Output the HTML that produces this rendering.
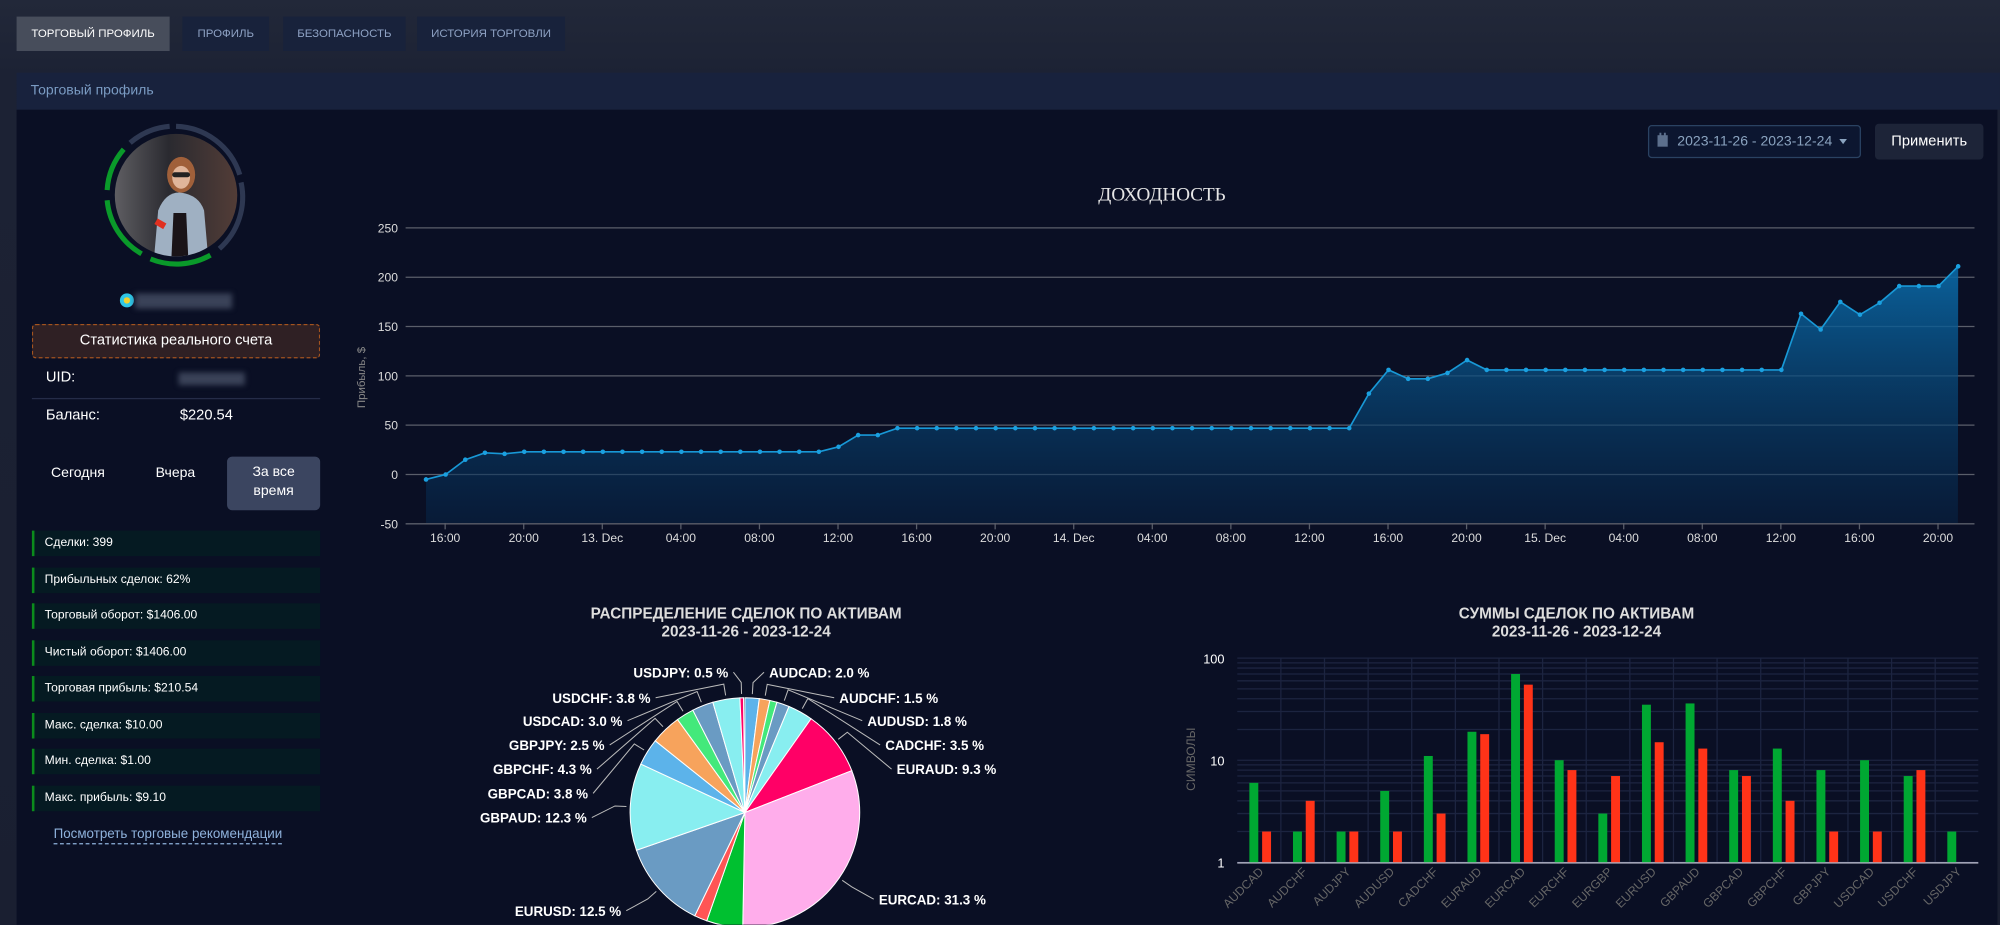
<!DOCTYPE html>
<html><head><meta charset="utf-8">
<style>
html,body{margin:0;padding:0;background:#1c2133;overflow:hidden;width:2000px;height:925px}
#w{position:absolute;left:0;top:0;width:1568px;height:725px;transform:scale(1.27551);transform-origin:0 0;
 background:linear-gradient(180deg,#222839 0,#1c2234 60px,#1a1f31 100%);font-family:"Liberation Sans",sans-serif;overflow:hidden}
.a{position:absolute}
.tab{position:absolute;top:13px;height:27px;line-height:27px;font-size:9px;text-align:center;color:#8ea2c4;background:#18223b}
.hdr{left:13px;top:57px;width:1555px;height:29px;background:#18223d;color:#7a9bc2;font-size:11px;line-height:29px;text-indent:11px}
.main{left:13px;top:86px;width:1553px;height:640px;background:#0a0f24}
.st{position:absolute;left:25px;width:226px;height:20px;background:#051a22;border-left:2px solid #0b8c1c;color:#fff;font-size:9.5px;line-height:20px;text-indent:8px;box-sizing:border-box}
.t{color:#fff;font-size:11.5px}
</style></head><body><div id="w">
<div class="tab" style="left:13px;width:120px;background:#474d5b;color:#fff">ТОРГОВЫЙ ПРОФИЛЬ</div>
<div class="tab" style="left:143px;width:68px">ПРОФИЛЬ</div>
<div class="tab" style="left:222px;width:96px">БЕЗОПАСНОСТЬ</div>
<div class="tab" style="left:327px;width:116px">ИСТОРИЯ ТОРГОВЛИ</div>
<div class="a hdr">Торговый профиль</div>
<div class="a main"></div>

<!-- avatar -->
<svg class="a" style="left:80px;top:95px" width="116" height="116" viewBox="0 0 116 116">
<defs><clipPath id="cc"><circle cx="58" cy="58" r="48"/></clipPath>
<linearGradient id="bgp" x1="0" y1="0" x2="1" y2="0"><stop offset="0" stop-color="#6b6a6e"/><stop offset=".45" stop-color="#2a2a30"/><stop offset="1" stop-color="#5a4038"/></linearGradient></defs>
<g clip-path="url(#cc)"><rect width="116" height="116" fill="url(#bgp)"/>
<path d="M40 116 L44 70 Q50 55 62 56 Q76 58 80 70 L84 116Z" fill="#9fb0c2"/>
<path d="M54 116 L56 72 L66 72 L68 116Z" fill="#1a1418"/>
<ellipse cx="62" cy="42" rx="11" ry="14" fill="#a0603a"/>
<ellipse cx="62" cy="44" rx="7" ry="9" fill="#e0b59a"/>
<rect x="55" y="40" width="14" height="4" rx="2" fill="#222"/>
<rect x="42" y="78" width="8" height="5" fill="#e03020" transform="rotate(30 46 80)"/></g>
<g fill="none" stroke-width="4">
<path d="M58 4 A54 54 0 0 1 108 42" stroke="#2e3852"/>
<path d="M109 48 A54 54 0 0 1 92 100" stroke="#2e3852"/>
<path d="M85 105 A54 54 0 0 1 38 108" stroke="#0a9a2a"/>
<path d="M31 104 A54 54 0 0 1 4 62" stroke="#0a9a2a"/>
<path d="M4 54 A54 54 0 0 1 17 22" stroke="#0a9a2a"/>
<path d="M22 17 A54 54 0 0 1 53 4" stroke="#2e3852"/></g></svg>
<div class="a" style="left:94px;top:230px;width:11px;height:11px;border-radius:50%;background:#2ec6e6"><div style="margin:3px;width:5px;height:5px;border-radius:50%;background:#f0d030"></div></div>
<div class="a" style="left:106px;top:230px;width:76px;height:12px;background:#3a4258;filter:blur(2px)"></div>
<div class="a" style="left:25px;top:254px;width:226px;height:27px;box-sizing:border-box;border:1px dashed #a3531f;border-radius:3px;background:#2f2024;color:#fff;font-size:11.5px;text-align:center;line-height:25px">Статистика реального счета</div>
<div class="a t" style="left:36px;top:290px">UID:</div>
<div class="a" style="left:140px;top:292px;width:52px;height:10px;background:#3a4258;filter:blur(2px)"></div>
<div class="a" style="left:25px;top:312px;width:226px;height:1px;background:#252c48"></div>
<div class="a t" style="left:36px;top:320px">Баланс:</div>
<div class="a t" style="left:141px;top:320px">$220.54</div>
<div class="a t" style="left:40px;top:365px;font-size:11px">Сегодня</div>
<div class="a t" style="left:122px;top:365px;font-size:11px">Вчера</div>
<div class="a" style="left:178px;top:358px;width:73px;height:42px;border-radius:4px;background:#3b4560;color:#fff;font-size:11px;text-align:center;line-height:15px;padding-top:5px;box-sizing:border-box">За все<br>время</div>
<div class="st" style="top:416px">Сделки: 399</div>
<div class="st" style="top:445px">Прибыльных сделок: 62%</div>
<div class="st" style="top:473px">Торговый оборот: $1406.00</div>
<div class="st" style="top:502px">Чистый оборот: $1406.00</div>
<div class="st" style="top:530px">Торговая прибыль: $210.54</div>
<div class="st" style="top:559px">Макс. сделка: $10.00</div>
<div class="st" style="top:587px">Мин. сделка: $1.00</div>
<div class="st" style="top:616px">Макс. прибыль: $9.10</div>
<div class="a" style="left:42px;top:648px;color:#8fb2dc;font-size:10.5px;border-bottom:1px dashed #8fb2dc;line-height:13px">Посмотреть торговые рекомендации</div>

<div class="a" style="left:1292px;top:98px;width:167px;height:26px;box-sizing:border-box;border:1px solid #2a4262;border-radius:3px;background:#0c1630;color:#8aa3bf;font-size:11px;line-height:24px;text-indent:22px">2023-11-26 - 2023-12-24</div>
<svg class="a" style="left:1299px;top:104px" width="10" height="12"><rect x="0.5" y="2" width="8" height="9" fill="#5c6f8c"/><rect x="2" y="0" width="1.5" height="3" fill="#5c6f8c"/><rect x="5.5" y="0" width="1.5" height="3" fill="#5c6f8c"/></svg>
<div class="a" style="left:1442px;top:109px;border:3px solid transparent;border-top:4px solid #8aa3bf"></div>
<div class="a" style="left:1470px;top:97px;width:85px;height:28px;border-radius:3px;background:#1d2438;color:#fff;font-size:11.5px;text-align:center;line-height:28px">Применить</div>

<svg id="c" class="a" style="left:0;top:0" width="1568" height="725" font-family="Liberation Sans, sans-serif"></svg>
</div>
<script>
var s=document.getElementById('c'),h='';
function T(x,y,t,o){h+='<text x="'+x+'" y="'+y+'" '+(o||'')+'>'+t+'</text>';}
T(911,157,'ДОХОДНОСТЬ','text-anchor="middle" font-family="Liberation Serif,serif" font-size="15" fill="#e6e6e6"');
var Y=function(v){return 372-v*0.7733;};
[250,200,150,100,50,0,-50].forEach(function(v){var y=Y(v);h+='<line x1="318" x2="1548" y1="'+y+'" y2="'+y+'" stroke="#5a5e6a"/>';T(312,y+3.5,v,'text-anchor="end" font-size="9.5" fill="#ddd"');});
T(0,0,'Прибыль, $','transform="translate(286,320) rotate(-90)" font-size="9" fill="#888"');
var L=['16:00','20:00','13. Dec','04:00','08:00','12:00','16:00','20:00','14. Dec','04:00','08:00','12:00','16:00','20:00','15. Dec','04:00','08:00','12:00','16:00','20:00'];
L.forEach(function(l,i){var x=349+61.6*i;h+='<line x1="'+x+'" x2="'+x+'" y1="410" y2="415" stroke="#5a5e6a"/>';T(x,425,l,'text-anchor="middle" font-size="9.5" fill="#ddd"');});
var v=[-5,0,15,22,21];for(var i=5;i<=20;i++)v.push(23);v.push(28,40,40);for(i=24;i<=47;i++)v.push(47);
v.push(82,106,97,97,103,116);for(i=54;i<=69;i++)v.push(106);v.push(163,147,175,162,174,191,191,191,211);
var p=v.map(function(a,i){return (334+15.4*i).toFixed(1)+','+Y(a).toFixed(1);});
h+='<defs><linearGradient id="ag" x1="0" y1="0" x2="0" y2="1"><stop offset="0" stop-color="#0a6aa8" stop-opacity=".9"/><stop offset="1" stop-color="#06264a" stop-opacity=".5"/></linearGradient></defs>';
h+='<polygon points="334,410 '+p.join(' ')+' 1535,410" fill="url(#ag)"/>';
h+='<polyline points="'+p.join(' ')+'" fill="none" stroke="#1898d6" stroke-width="1.3"/>';
p.forEach(function(q){var a=q.split(',');h+='<circle cx="'+a[0]+'" cy="'+a[1]+'" r="1.8" fill="#1aa0e0"/>';});
T(585,485,'РАСПРЕДЕЛЕНИЕ СДЕЛОК ПО АКТИВАМ','text-anchor="middle" font-size="12" font-weight="bold" fill="#ddd"');
T(585,499,'2023-11-26 - 2023-12-24','text-anchor="middle" font-size="12" font-weight="bold" fill="#ddd"');
var P=[['AUDCAD',2,'#5cb3ea'],['AUDCHF',1.5,'#f7a35c'],['AUDJPY',1,'#43e97b'],['AUDUSD',1.8,'#6a9bc3'],['CADCHF',3.5,'#88eef0'],['EURAUD',9.3,'#ff0066'],['EURCAD',31.3,'#ffadeb'],['EURCHF',5.1,'#00c030'],['EURGBP',1.8,'#ff5555'],['EURUSD',12.5,'#6a9bc3'],['GBPAUD',12.3,'#88eef0'],['GBPCAD',3.8,'#5cb3ea'],['GBPCHF',4.3,'#f7a35c'],['GBPJPY',2.5,'#43e97b'],['USDCAD',3,'#6a9bc3'],['USDCHF',3.8,'#88eef0'],['USDJPY',0.5,'#ff0066']];
var cx=584,cy=637,R=90,acc=0,tot=100.2;
var lab={AUDCAD:[603,531,0],AUDCHF:[658,551,0],AUDUSD:[680,569,0],CADCHF:[694,588,0],EURAUD:[703,607,0],EURCAD:[689,709,0],USDJPY:[571,531,1],USDCHF:[510,551,1],USDCAD:[488,569,1],GBPJPY:[474,588,1],GBPCHF:[464,607,1],GBPCAD:[461,626,1],GBPAUD:[460,645,1],EURUSD:[487,718,1]};
P.forEach(function(d){var a0=acc/tot*2*Math.PI-Math.PI/2;acc+=d[1];var a1=acc/tot*2*Math.PI-Math.PI/2;
 var x0=cx+R*Math.cos(a0),y0=cy+R*Math.sin(a0),x1=cx+R*Math.cos(a1),y1=cy+R*Math.sin(a1);
 h+='<path d="M'+cx+','+cy+'L'+x0.toFixed(1)+','+y0.toFixed(1)+'A'+R+','+R+' 0 '+((a1-a0)>Math.PI?1:0)+' 1 '+x1.toFixed(1)+','+y1.toFixed(1)+'Z" fill="'+d[2]+'" stroke="#fff" stroke-width="0.8"/>';
 var l=lab[d[0]];if(l){var am=(a0+a1)/2,ex=cx+(R+3)*Math.cos(am),ey=cy+(R+3)*Math.sin(am),ox=cx+(R+12)*Math.cos(am),oy=cy+(R+12)*Math.sin(am);
  var lx=l[2]?l[0]+4:l[0]-4;h+='<polyline points="'+ex+','+ey+' '+ox+','+oy+' '+lx+','+(l[1]-4)+'" fill="none" stroke="#bbb" stroke-width="0.8"/>';
  T(l[0],l[1],d[0]+': '+d[1].toFixed(1)+' %','font-size="10.5" font-weight="bold" fill="#fff" '+(l[2]?'text-anchor="end"':''));}
});
T(1236,485,'СУММЫ СДЕЛОК ПО АКТИВАМ','text-anchor="middle" font-size="12" font-weight="bold" fill="#ddd"');
T(1236,499,'2023-11-26 - 2023-12-24','text-anchor="middle" font-size="12" font-weight="bold" fill="#ddd"');
var BX=970,BW=34.2,BY=function(v){return 676-80*Math.log10(v);};
[1,2,3,4,5,6,7,8,9,10,20,30,40,50,60,70,80,90,100].forEach(function(v){var y=BY(v);h+='<line x1="'+BX+'" x2="1551" y1="'+y+'" y2="'+y+'" stroke="#1c2440"/>';});
for(i=1;i<17;i++){var x=BX+BW*i;h+='<line x1="'+x+'" x2="'+x+'" y1="516" y2="676" stroke="#1c2440"/>';}
h+='<line x1="'+BX+'" x2="1551" y1="676.5" y2="676.5" stroke="#ccd"/>';
T(960,520,'100','text-anchor="end" font-size="10" fill="#fff"');T(960,600,'10','text-anchor="end" font-size="10" fill="#fff"');T(960,680,'1','text-anchor="end" font-size="10" fill="#fff"');
T(0,0,'СИМВОЛЫ','transform="translate(937,620) rotate(-90)" font-size="9.5" fill="#666"');
var B=[['AUDCAD',6,2],['AUDCHF',2,4],['AUDJPY',2,2],['AUDUSD',5,2],['CADCHF',11,3],['EURAUD',19,18],['EURCAD',70,55],['EURCHF',10,8],['EURGBP',3,7],['EURUSD',35,15],['GBPAUD',36,13],['GBPCAD',8,7],['GBPCHF',13,4],['GBPJPY',8,2],['USDCAD',10,2],['USDCHF',7,8],['USDJPY',2,0]];
B.forEach(function(b,i){var x=BX+BW*i;
 if(b[1]){var y=BY(b[1]);h+='<rect x="'+(x+9.5)+'" y="'+y+'" width="7" height="'+(676-y)+'" fill="#00a832"/>';}
 if(b[2]){var y=BY(b[2]);h+='<rect x="'+(x+19.5)+'" y="'+y+'" width="7" height="'+(676-y)+'" fill="#ff3318"/>';}
 var cxx=x+BW/2+4;T(0,0,b[0],'transform="translate('+cxx+',684) rotate(-45)" text-anchor="end" font-size="9.5" fill="#666"');
});
s.innerHTML=h;
</script>
</body></html>
